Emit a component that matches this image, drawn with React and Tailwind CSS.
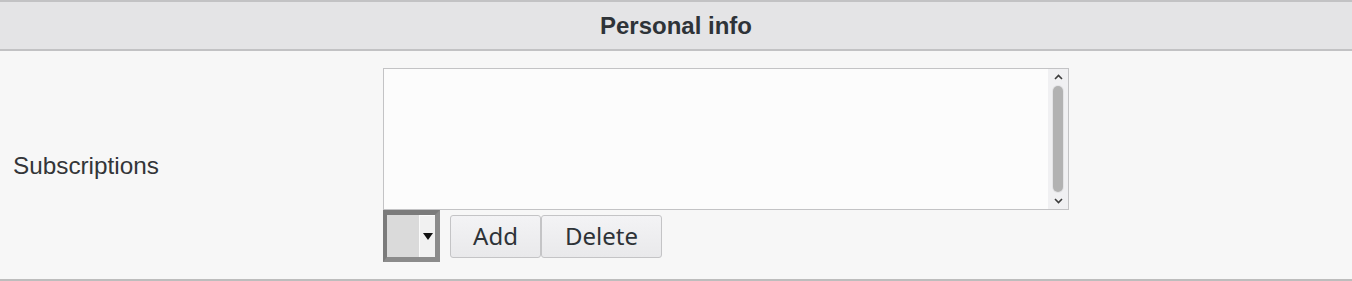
import React from "react";

const Chevron = ({ down }) => (
  <svg width="9" height="6" viewBox="0 0 9 6" className="block">
    <polyline
      points={down ? "1,1 4.5,4.5 8,1" : "1,5 4.5,1.5 8,5"}
      fill="none"
      stroke="#3c3c3c"
      strokeWidth="1.6"
    />
  </svg>
);

const App = () => {
  return (
    <div className="w-[1352px] h-[281px] bg-[#f7f7f7] font-['Liberation_Sans',Arial,sans-serif]">
      {/* Section header */}
      <div className="h-[51px] flex items-center justify-center bg-[#e4e4e6] border-y-2 border-[#c2c2c4] text-[24px] font-bold text-[#2e3338]">
        Personal info
      </div>

      {/* Row */}
      <div className="flex h-[230px] border-b-2 border-[#bdbdbd]">
        <div className="w-[383px] flex items-center pl-[13px] pt-[2px] text-[24.3px] text-[#333538]">
          Subscriptions
        </div>

        <div className="pt-[17px]">
          {/* List box */}
          <div className="w-[686px] h-[142px] flex border border-[#c3c3c5] bg-[#fcfcfc]">
            <textarea className="flex-1 resize-none bg-transparent outline-none" />
            <div className="w-[20px] flex flex-col items-center justify-between bg-[#f0f0f2]">
              <div className="h-[16px] flex items-center justify-center">
                <Chevron />
              </div>
              <div className="w-[10px] h-[106px] rounded-full bg-[#b2b2b2] ring-1 ring-[#e4e4e6]" />
              <div className="h-[16px] flex items-center justify-center">
                <Chevron down />
              </div>
            </div>
          </div>

          {/* Controls */}
          <div className="flex items-center">
            <div className="w-[57px] h-[52px] flex border-t-[5px] border-l-[4px] border-r-[5px] border-b-[5px] border-t-[#7b7b7b] border-l-[#7b7b7b] border-r-[#8b8b8b] border-b-[#8b8b8b]">
              <div className="flex-1 bg-[#dadada]" />
              <div className="w-[16px] flex items-center justify-center bg-[#f1f1f1] border-t border-l border-[#fafafa]">
                <svg width="10" height="7" viewBox="0 0 10 7">
                  <polygon points="0,0 10,0 5,7" fill="#111" />
                </svg>
              </div>
            </div>
            <div className="flex ml-[10px] font-['Noto_Sans',sans-serif] text-[24px] text-[#2e3338]">
              <button className="w-[91px] h-[43px] flex items-center justify-center border border-[#c4c4c6] rounded-[3px] bg-gradient-to-b from-[#f3f3f5] to-[#e9e9eb]">
                Add
              </button>
              <button className="w-[121px] h-[43px] flex items-center justify-center border border-[#c4c4c6] rounded-[3px] bg-gradient-to-b from-[#f3f3f5] to-[#e9e9eb]">
                Delete
              </button>
            </div>
          </div>
        </div>
      </div>
    </div>
  );
};

export default App;
